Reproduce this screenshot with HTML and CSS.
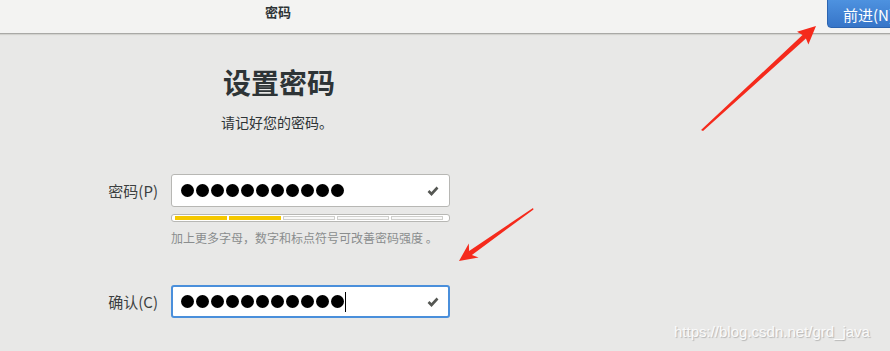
FILE: index.html
```html
<!DOCTYPE html>
<html lang="zh-CN">
<head>
<meta charset="utf-8">
<title>密码</title>
<link rel="stylesheet" href="styles.css">
</head>
<body>
<div class="page">
  <header class="header">
    <span class="header-title">密码</span>
    <button class="next-btn">前进(N)</button>
  </header>
  <main class="main">
    <h1 class="title">设置密码</h1>
    <p class="subtitle">请记好您的密码。</p>
    <div class="form">
      <label class="label">密码(P)</label>
      <div class="input">
        <div class="dots">
          <i></i><i></i><i></i><i></i><i></i><i></i><i></i><i></i><i></i><i></i><i></i>
        </div>
        <svg class="check" width="12" height="10" viewBox="0 0 12 10"><path d="M1.5 5 L4.5 8 L10.5 1.5" fill="none" stroke="#555753" stroke-width="2.6"/></svg>
      </div>
      <div></div>
      <div class="strength">
        <span class="seg on"></span><span class="seg on"></span><span class="seg"></span><span class="seg"></span><span class="seg"></span>
      </div>
      <div></div>
      <p class="hint">加上更多字母，数字和标点符号可改善密码强度 。</p>
      <label class="label label-confirm">确认(C)</label>
      <div class="input input-focus">
        <div class="dots">
          <i></i><i></i><i></i><i></i><i></i><i></i><i></i><i></i><i></i><i></i><i></i><b class="caret"></b>
        </div>
        <svg class="check" width="12" height="10" viewBox="0 0 12 10"><path d="M1.5 5 L4.5 8 L10.5 1.5" fill="none" stroke="#555753" stroke-width="2.6"/></svg>
      </div>
    </div>
  </main>
  <div class="watermark">https://blog.csdn.net/grd_java</div>
  <svg class="arrows" width="890" height="351" viewBox="0 0 890 351">
    <polygon points="701,130 703,131 805.9,38.6 808.4,44.4 816,26 797,31.8 802.5,35" fill="#f52a1c"/>
    <polygon points="533,208 533.5,209.5 471.9,254.9 478.6,257.6 459,261 468.8,243.6 469.1,250.9" fill="#f52a1c"/>
  </svg>
</div>
</body>
</html>
```

FILE: styles.css
```css
* { box-sizing: border-box; }
html, body { margin: 0; padding: 0; }
body {
  width: 890px;
  height: 351px;
  overflow: hidden;
  background: #e8e8e7;
  font-family: "Noto Sans CJK SC", "Noto Sans", "DejaVu Sans", sans-serif;
  color: #2e3436;
}
.page {
  position: relative;
  width: 890px;
  height: 351px;
  overflow: hidden;
}
.header {
  display: flex;
  align-items: flex-start;
  height: 34px;
  padding-left: 265px;
  background: #f3f3f2;
  border-bottom: 1px solid #a9a9a6;
  box-shadow: 0 1px 1px #d2d2cf;
  overflow: hidden;
}
.header-title {
  width: 562px;
  flex-shrink: 0;
  font-size: 13px;
  font-weight: bold;
  line-height: 24px;
  color: #2e3436;
}
.next-btn {
  flex-shrink: 0;
  width: 80px;
  height: 32px;
  margin-top: -4px;
  padding: 4px 0 0 15px;
  text-align: left;
  font-family: inherit;
  font-size: 15px;
  line-height: 28px;
  color: #ffffff;
  background: linear-gradient(#5095e2, #3775c8);
  border: 1px solid #2c64b0;
  border-radius: 4px;
  white-space: nowrap;
}
.main {
  width: 558px;
  padding-top: 31px;
  display: flex;
  flex-direction: column;
  align-items: center;
}
.title {
  margin: 0;
  font-size: 28px;
  line-height: 34px;
  font-weight: bold;
  color: #2e3436;
}
.subtitle {
  margin: 13px 0 0;
  font-size: 14px;
  line-height: 20px;
  color: #2e3436;
  padding-right: 4px;
}
.form {
  align-self: flex-start;
  margin-top: 42px;
  display: grid;
  grid-template-columns: 158px 279px;
  column-gap: 13px;
}
.label {
  align-self: center;
  text-align: right;
  font-size: 15px;
  line-height: 20px;
  color: #3c3f40;
}
.label-confirm { margin-top: 39px; }
.input {
  height: 33px;
  display: flex;
  align-items: center;
  justify-content: space-between;
  padding: 0 10px 0 9px;
  background: #ffffff;
  border: 1px solid #b7b7b4;
  border-radius: 3px;
}
.input-focus {
  margin-top: 39px;
  border: 2px solid #4a8fdb;
  padding-left: 8px;
  padding-right: 9px;
}
.dots {
  display: flex;
  align-items: center;
  gap: 2px;
}
.dots i {
  display: block;
  width: 13px;
  height: 13px;
  border-radius: 50%;
  background: #000000;
}
.caret {
  display: block;
  width: 1px;
  height: 20px;
  background: #000;
  margin-left: -1px;
}
.check { display: block; }
.strength {
  margin-top: 7px;
  height: 8px;
  display: flex;
  gap: 2px;
  padding: 1px 6px 1px 3px;
  background: #ffffff;
  border: 1px solid #b7b7b4;
  border-radius: 3px;
}
.seg {
  flex: 1;
  height: 4px;
  background: #f8f8f8;
  border: 1px solid #cfcfcc;
}
.seg.on {
  background: #f5c800;
  border-color: #f5c800;
}
.hint {
  margin: 8px 0 0;
  font-size: 12px;
  line-height: 16px;
  color: #8a8d8e;
  white-space: nowrap;
}
.watermark {
  position: absolute;
  left: 674px;
  top: 323px;
  font-family: "Liberation Sans", Arial, sans-serif;
  font-size: 15px;
  line-height: 18px;
  color: rgba(255, 255, 255, 0.9);
  text-shadow: 1px 1px 1px rgba(0, 0, 0, 0.22);
  white-space: nowrap;
}
.arrows {
  position: absolute;
  left: 0;
  top: 0;
  pointer-events: none;
}
```
